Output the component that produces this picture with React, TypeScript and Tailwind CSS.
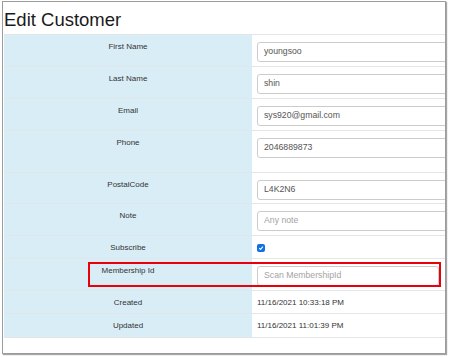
import React from "react";

type Row = {
  label: string;
  h: string;
  kind: "input" | "check" | "text";
  value?: string;
  placeholder?: string;
  narrow?: boolean;
};

const rows: Row[] = [
  { label: "First Name", h: "h-[32px]", kind: "input", value: "youngsoo" },
  { label: "Last Name", h: "h-[32px]", kind: "input", value: "shin" },
  { label: "Email", h: "h-[32px]", kind: "input", value: "sys920@gmail.com" },
  { label: "Phone", h: "h-[42px]", kind: "input", value: "2046889873" },
  { label: "PostalCode", h: "h-[31px]", kind: "input", value: "L4K2N6" },
  { label: "Note", h: "h-[32px]", kind: "input", placeholder: "Any note" },
  { label: "Subscribe", h: "h-[23px]", kind: "check" },
  { label: "Membership Id", h: "h-[32px]", kind: "input", placeholder: "Scan MembershipId", narrow: true },
  { label: "Created", h: "h-[23px]", kind: "text", value: "11/16/2021 10:33:18 PM" },
  { label: "Updated", h: "h-[24px]", kind: "text", value: "11/16/2021 11:01:39 PM" },
];

const Field = ({ row }: { row: Row }) => {
  if (row.kind === "check") {
    return (
      <div className="pt-[8px] pl-[5px]">
        <span className="flex items-center justify-center w-[8px] h-[8px] rounded-[2px] bg-[#1170e6]">
          <svg width="6" height="6" viewBox="0 0 10 10">
            <path d="M2 5.2 L4.2 7.4 L8.2 2.8" fill="none" stroke="#fff" strokeWidth="1.8" />
          </svg>
        </span>
      </div>
    );
  }
  if (row.kind === "text") {
    return <div className="pt-[7px] pl-[5px] text-[8px] leading-[10px] text-[#333] whitespace-nowrap">{row.value}</div>;
  }
  return (
    <div className="pt-[7px] pl-[5px]">
      <div
        className={`h-[20px] ${row.narrow ? "w-[182px]" : "w-[210px]"} border border-[#cccccc] rounded-[3px] bg-white flex items-center pl-[6px] text-[8.7px] whitespace-nowrap ${
          row.value ? "text-[#555]" : "text-[#a3a3a3]"
        }`}
      >
        {row.value ?? row.placeholder}
      </div>
    </div>
  );
};

export default function App() {
  return (
    <div className="relative w-[449px] h-[357px] bg-white overflow-hidden font-['Liberation_Sans',Arial,sans-serif]">
      <div className="ml-[2px] mt-[1px] w-[444px] h-[353px] border border-[#9c9c9c] shadow-[1px_1px_1px_rgba(0,0,0,0.35)] overflow-hidden bg-white">
        <h1 className="h-[32px] pl-[1px] pt-[9px] text-[18.5px] leading-none text-[#1a1a1a]">Edit Customer</h1>
        <div className="ml-[1px] border-b border-[#e2e6e8]">
          {rows.map((r) => (
            <div key={r.label} className={`flex ${r.h} border-t border-[#e2e6e8]`}>
              <div className="w-[248px] shrink-0 bg-[#d9edf7] pt-[7px] text-center text-[8px] leading-[10px] text-[#333]">
                {r.label}
              </div>
              <div className="flex-1 min-w-0 overflow-hidden">
                <Field row={r} />
              </div>
            </div>
          ))}
        </div>
      </div>
      <div className="absolute left-[88px] top-[262px] w-[353px] h-[25px] border-2 border-[#e8000b]" />
    </div>
  );
}
